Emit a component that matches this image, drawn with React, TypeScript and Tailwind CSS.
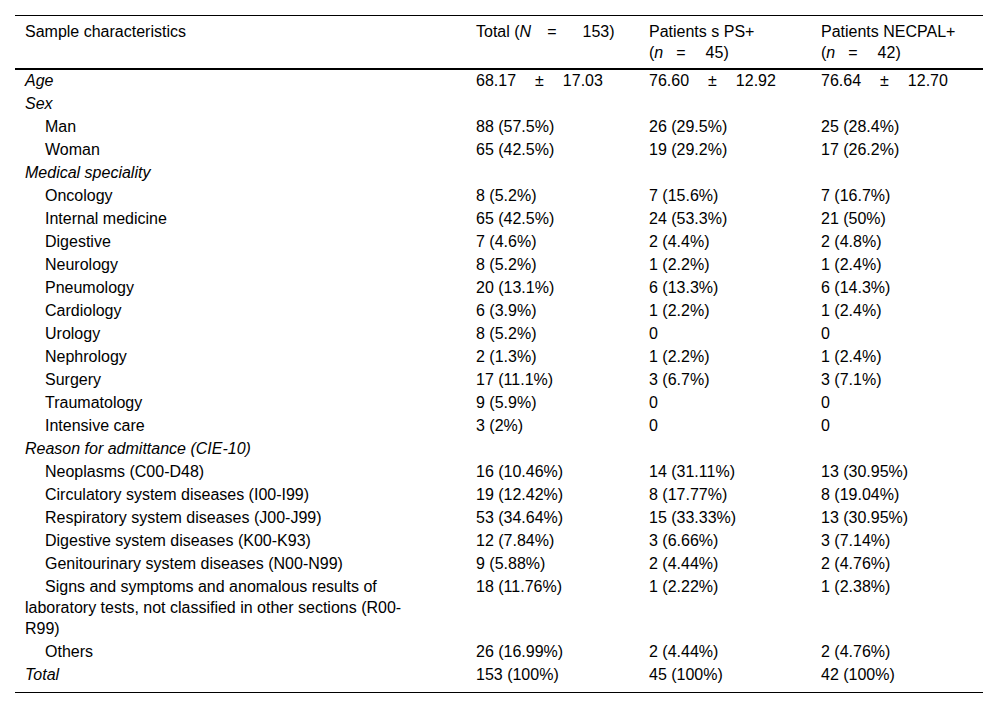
import React from "react";

type Row = {
  label: string;
  kind: "group" | "item";
  vals?: [string, string, string];
};

const rows: Row[] = [
  { label: "Sex", kind: "group" },
  { label: "Man", kind: "item", vals: ["88 (57.5%)", "26 (29.5%)", "25 (28.4%)"] },
  { label: "Woman", kind: "item", vals: ["65 (42.5%)", "19 (29.2%)", "17 (26.2%)"] },
  { label: "Medical speciality", kind: "group" },
  { label: "Oncology", kind: "item", vals: ["8 (5.2%)", "7 (15.6%)", "7 (16.7%)"] },
  { label: "Internal medicine", kind: "item", vals: ["65 (42.5%)", "24 (53.3%)", "21 (50%)"] },
  { label: "Digestive", kind: "item", vals: ["7 (4.6%)", "2 (4.4%)", "2 (4.8%)"] },
  { label: "Neurology", kind: "item", vals: ["8 (5.2%)", "1 (2.2%)", "1 (2.4%)"] },
  { label: "Pneumology", kind: "item", vals: ["20 (13.1%)", "6 (13.3%)", "6 (14.3%)"] },
  { label: "Cardiology", kind: "item", vals: ["6 (3.9%)", "1 (2.2%)", "1 (2.4%)"] },
  { label: "Urology", kind: "item", vals: ["8 (5.2%)", "0", "0"] },
  { label: "Nephrology", kind: "item", vals: ["2 (1.3%)", "1 (2.2%)", "1 (2.4%)"] },
  { label: "Surgery", kind: "item", vals: ["17 (11.1%)", "3 (6.7%)", "3 (7.1%)"] },
  { label: "Traumatology", kind: "item", vals: ["9 (5.9%)", "0", "0"] },
  { label: "Intensive care", kind: "item", vals: ["3 (2%)", "0", "0"] },
  { label: "Reason for admittance (CIE-10)", kind: "group" },
  { label: "Neoplasms (C00-D48)", kind: "item", vals: ["16 (10.46%)", "14 (31.11%)", "13 (30.95%)"] },
  { label: "Circulatory system diseases (I00-I99)", kind: "item", vals: ["19 (12.42%)", "8 (17.77%)", "8 (19.04%)"] },
  { label: "Respiratory system diseases (J00-J99)", kind: "item", vals: ["53 (34.64%)", "15 (33.33%)", "13 (30.95%)"] },
  { label: "Digestive system diseases (K00-K93)", kind: "item", vals: ["12 (7.84%)", "3 (6.66%)", "3 (7.14%)"] },
  { label: "Genitourinary system diseases (N00-N99)", kind: "item", vals: ["9 (5.88%)", "2 (4.44%)", "2 (4.76%)"] },
  {
    label: "Signs and symptoms and anomalous results of laboratory tests, not classified in other sections (R00-R99)",
    kind: "item",
    vals: ["18 (11.76%)", "1 (2.22%)", "1 (2.38%)"],
  },
  { label: "Others", kind: "item", vals: ["26 (16.99%)", "2 (4.44%)", "2 (4.76%)"] },
];

function PM({ a, b }: { a: string; b: string }) {
  return (
    <span className="whitespace-nowrap">
      {a}
      <span className="ml-[19px] mr-[19px]">±</span>
      {b}
    </span>
  );
}

function EqN({ n }: { n: string }) {
  return (
    <span className="whitespace-nowrap">
      (<i>N</i>
      <span className="ml-[16px] mr-[26px]">=</span>
      {n})
    </span>
  );
}

function Eqn({ n }: { n: string }) {
  return (
    <span className="whitespace-nowrap">
      (<i>n</i>
      <span className="ml-[13px] mr-[20px]">=</span>
      {n})
    </span>
  );
}

const td = "align-top pl-[10px] pt-0 pb-[2px]";
const th = "align-top text-left font-normal pl-[10px] pt-[5px] pb-[5px]";

export default function App() {
  return (
    <div className="bg-white w-[1000px] h-[708px] pt-[15px] pl-[15px] pr-[17px] font-['Liberation_Sans',Arial,sans-serif] text-[16px] text-black">
      <table className="w-[968px] table-fixed border-collapse">
        <colgroup>
          <col className="w-[451px]" />
          <col className="w-[173px]" />
          <col className="w-[172px]" />
          <col className="w-[172px]" />
        </colgroup>
        <thead>
          <tr className="border-t border-black border-b-2 leading-[21px]">
            <th className={th}>Sample characteristics</th>
            <th className={th}>
              Total <EqN n="153" />
            </th>
            <th className={th}>
              <span className="block">Patients s PS+</span>
              <Eqn n="45" />
            </th>
            <th className={th}>
              <span className="block">Patients NECPAL+</span>
              <Eqn n="42" />
            </th>
          </tr>
        </thead>
        <tbody className="leading-[21px]">
          <tr>
            <td className={`${td} italic`}>Age</td>
            <td className={td}>
              <PM a="68.17" b="17.03" />
            </td>
            <td className={td}>
              <PM a="76.60" b="12.92" />
            </td>
            <td className={td}>
              <PM a="76.64" b="12.70" />
            </td>
          </tr>
          {rows.map((r) => (
            <tr key={r.label}>
              <td className={`${td} pr-[46px] ${r.kind === "group" ? "italic" : "indent-[20px]"}`}>
                {r.label}
              </td>
              <td className={td}>{r.vals?.[0] ?? ""}</td>
              <td className={td}>{r.vals?.[1] ?? ""}</td>
              <td className={td}>{r.vals?.[2] ?? ""}</td>
            </tr>
          ))}
          <tr className="border-b border-black">
            <td className={`${td} italic pb-[7px]`}>Total</td>
            <td className={`${td} pb-[7px]`}>153 (100%)</td>
            <td className={`${td} pb-[7px]`}>45 (100%)</td>
            <td className={`${td} pb-[7px]`}>42 (100%)</td>
          </tr>
        </tbody>
      </table>
    </div>
  );
}
